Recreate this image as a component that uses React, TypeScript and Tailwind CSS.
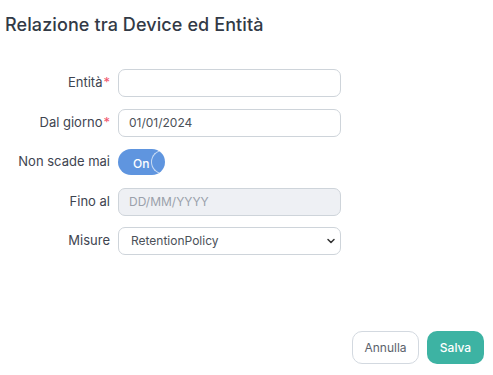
import { ChevronDown } from 'lucide-react'

const font = { fontFamily: 'Inter, "Noto Sans", sans-serif' }

function Row({ label, required, children }: { label: string; required?: boolean; children: React.ReactNode }) {
  return (
    <div className="flex items-center h-[28px]">
      <div className="w-[114px] pr-[4px] text-right text-[13px] text-[#3e4450]">
        {label}
        {required && <span className="text-[#f1556c] ml-[1px]">*</span>}
      </div>
      <div className="ml-[4px] w-[223px]">{children}</div>
    </div>
  )
}

export default function App() {
  return (
    <div className="w-[493px] h-[375px] bg-white relative" style={font}>
      <h1 className="pl-[5px] pt-[11px] text-[18px] font-medium text-[#323a46] tracking-[0.1px]">
        Relazione tra Device ed Entità
      </h1>

      <div className="mt-[31px] flex flex-col gap-[11.5px]">
        <Row label="Entità" required>
          <input className="w-full h-[28px] border border-[#ced4da] rounded-[7px] px-[12px] text-[12px] outline-none" />
        </Row>
        <Row label="Dal giorno" required>
          <input
            defaultValue="01/01/2024"
            className="w-full h-[28px] border border-[#ced4da] rounded-[7px] px-[10px] text-[12px] text-[#4b5159] outline-none"
          />
        </Row>
        <Row label="Non scade mai">
          <div className="relative w-[47px] h-[26px] rounded-full bg-[#5f95df] overflow-hidden">
            <span className="absolute left-[15px] top-[6px] text-[12px] font-medium text-white">On</span>
            <span className="absolute right-[0px] top-[1px] w-[14px] h-[24px] rounded-l-full border-l border-t border-b border-[#c8dbf3]" />
          </div>
        </Row>
        <Row label="Fino al">
          <input
            disabled
            placeholder="DD/MM/YYYY"
            className="w-full h-[28px] border border-[#ced4da] rounded-[7px] px-[10px] text-[12px] bg-[#eef0f4] placeholder-[#9aa1ab] outline-none"
          />
        </Row>
        <Row label="Misure">
          <div className="relative w-full h-[28px] border border-[#ced4da] rounded-[7px] flex items-center px-[12px] text-[12px] text-[#4b5159]">
            RetentionPolicy
            <ChevronDown className="absolute right-[3px] w-[12px] h-[12px] text-[#333]" strokeWidth={3} />
          </div>
        </Row>
      </div>

      <div className="absolute right-[9px] top-[331px] flex gap-[8px]">
        <button className="h-[33px] w-[67px] rounded-[10px] border border-[#d3d9e0] text-[12px] text-[#5b626b] bg-white">
          Annulla
        </button>
        <button className="h-[33px] w-[57px] rounded-[10px] bg-[#3db3a3] text-[12px] font-medium text-white">
          Salva
        </button>
      </div>
    </div>
  )
}
